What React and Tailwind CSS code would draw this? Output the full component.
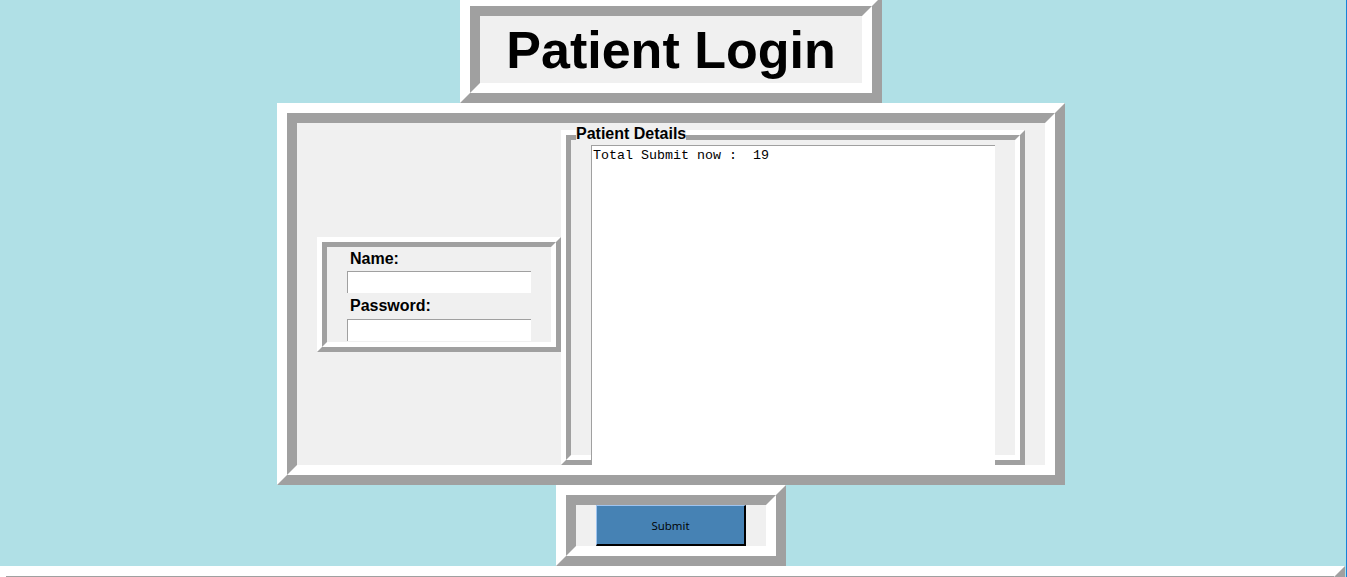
import React from "react";

const outer = "border-t-white border-l-white border-r-[#a0a0a0] border-b-[#a0a0a0]";
const inner = "border-t-[#a0a0a0] border-l-[#a0a0a0] border-r-white border-b-white";

export default function App() {
  return (
    <div className="flex h-[577px] w-[1347px] overflow-hidden bg-[#b0e0e6] font-['Liberation_Sans',Arial,sans-serif] text-black">
      <div className="flex w-[1346px] flex-col items-center pr-[4px]">
        {/* Title */}
        <div className={`-mt-[4px] border-[10px] ${outer}`}>
          <div className={`flex h-[87px] w-[402px] items-start justify-center border-[10px] ${inner} bg-[#f0f0f0]`}>
            <h1 className="h-[67px] pt-[2px] text-[52px] font-bold leading-[65px]">Patient Login</h1>
          </div>
        </div>

        {/* Main box */}
        <div className={`border-[10px] ${outer}`}>
          <div className={`border-[10px] ${inner}`}>
            <div className="flex h-[342px] w-[748px] items-center bg-[#f0f0f0] px-[20px]">
              {/* Login box */}
              <div className={`border-[5px] ${outer}`}>
                <div className={`border-[5px] ${inner}`}>
                  <div className="flex h-[95px] w-[224px] flex-col overflow-hidden bg-[#f0f0f0] pt-[3px]">
                    <div className="pl-[23px] text-[16px] font-bold leading-[18px]">Name:</div>
                    <div className="ml-[20px] mt-[3px] h-[22px] w-[184px] shrink-0 border-l border-t border-l-[#a0a0a0] border-t-[#a0a0a0] bg-white"></div>
                    <div className="mt-[4px] pl-[23px] text-[16px] font-bold leading-[18px]">Password:</div>
                    <div className="ml-[20px] mt-[4px] h-[22px] w-[184px] shrink-0 border-l border-t border-l-[#a0a0a0] border-t-[#a0a0a0] bg-white"></div>
                  </div>
                </div>
              </div>

              {/* Patient details fieldset */}
              <div className={`relative mt-[7px] self-stretch border-[5px] ${outer}`}>
                <div className={`h-full w-[454px] border-[5px] ${inner} bg-[#f0f0f0]`}>
                  <div className="ml-[20px] mt-[5px] h-[320px] w-[404px] border-l border-t border-l-[#a0a0a0] border-t-[#a0a0a0] bg-white pl-[1px] pt-[2px] font-['Liberation_Mono','Courier_New',monospace] text-[13.33px] leading-[15px] whitespace-pre">
                    {"Total Submit now :  19"}
                  </div>
                </div>
                <div className="absolute left-[10px] top-[-10px] bg-[#f0f0f0] text-[16px] font-bold leading-[18px]">
                  Patient Details
                </div>
              </div>
            </div>
          </div>
        </div>

        {/* Submit box */}
        <div className={`border-[10px] ${outer}`}>
          <div className={`border-[10px] ${inner}`}>
            <div className="flex h-[41px] w-[190px] bg-[#f0f0f0] px-[20px]">
              <button className="flex h-[41px] w-[150px] items-center justify-center border-b-2 border-l border-r-2 border-t border-b-black border-l-[#9fc4ef] border-r-black border-t-[#9fc4ef] bg-[#4682b4] pt-[1px] font-['Open_Sans',sans-serif] text-[11.5px] text-black">
                Submit
              </button>
            </div>
          </div>
        </div>

        {/* Bottom bar */}
        <div className={`-ml-[4px] w-[1349px] self-start border-[10px] border-b-0 ${outer}`}>
          <div className={`h-[20px] border-[10px] ${inner}`}></div>
        </div>
      </div>
      <div className="h-full w-px bg-[#1883d7]"></div>
    </div>
  );
}
